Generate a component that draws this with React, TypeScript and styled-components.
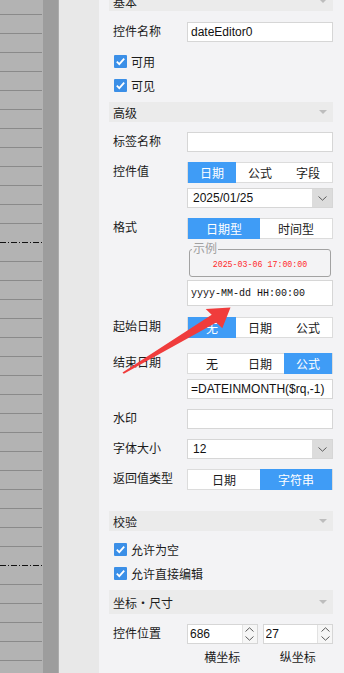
import styled, { createGlobalStyle } from "styled-components";

const GlobalStyle = createGlobalStyle`
  html, body {
    margin: 0;
    padding: 0;
    overflow: hidden;
  }
  body {
    font-family: "Liberation Sans", "Noto Sans CJK SC", sans-serif;
    font-size: 12px;
    color: #1b1b1b;
  }
`;

const GRID_ROWS = 35;
const DASHED_ROWS = [12, 29];

const Canvas = () => (
  <SCanvas width="43" height="673" viewBox="0 0 43 673">
    <rect width="43" height="673" fill="#b3b3b3" />
    {Array.from({ length: GRID_ROWS }, (_, k) => {
      const y = 14 + 19 * k + 0.5;
      const dashed = DASHED_ROWS.includes(k);
      return (
        <line
          key={k}
          x1="0"
          x2="42"
          y1={y}
          y2={y}
          stroke={dashed ? "#111" : "#8a8a8a"}
          strokeWidth="1"
          strokeDasharray={dashed ? "6 2 1 2" : undefined}
        />
      );
    })}
  </SCanvas>
);

const Chevron = ({ up }: { up?: boolean }) => (
  <svg width="9" height="5" viewBox="0 0 9 5">
    <path
      d={up ? "M0.5 4.5 L4.5 0.8 L8.5 4.5" : "M0.5 0.5 L4.5 4.2 L8.5 0.5"}
      fill="none"
      stroke="#5a5a5a"
      strokeWidth="1"
    />
  </svg>
);

const Check = ({ label }: { label: string }) => (
  <SCheckRow>
    <SBox>
      <svg width="13" height="13" viewBox="0 0 13 13">
        <path d="M2.8 6.6 L5.3 9.1 L10.2 3.6" fill="none" stroke="#fff" strokeWidth="1.8" />
      </svg>
    </SBox>
    {label}
  </SCheckRow>
);

const Segmented = ({ items, active }: { items: string[]; active: number }) => (
  <SSeg>
    {items.map((it, i) => (
      <SSegItem key={it} $on={i === active}>
        {it}
      </SSegItem>
    ))}
  </SSeg>
);

const Select = ({ value }: { value: string }) => (
  <SSelect>
    <SSelectText>{value}</SSelectText>
    <SSelectBtn>
      <Chevron />
    </SSelectBtn>
  </SSelect>
);

const Spinner = ({ value }: { value: string }) => (
  <SSpinner>
    <SSpinInput readOnly defaultValue={value} />
    <SSpinBtns>
      <Chevron up />
      <Chevron />
    </SSpinBtns>
  </SSpinner>
);

export default function App() {
  return (
    <SPage>
      <GlobalStyle />
      <Canvas />
      <SGutter />
      <SSpacer />
      <SPanel>
        <SPanelInner>
          <SHeader>
            基本 <SCaret />
          </SHeader>

          <SRow $mt={11}>
            <SLabel>控件名称</SLabel>
            <SControls>
              <SInput readOnly defaultValue="dateEditor0" />
            </SControls>
          </SRow>
          <SChecks $mt={7}>
            <Check label="可用" />
            <Check label="可见" />
          </SChecks>

          <SHeader $mt={5}>
            高级 <SCaret />
          </SHeader>

          <SRow $mt={10}>
            <SLabel>标签名称</SLabel>
            <SControls>
              <SInput readOnly defaultValue="" />
            </SControls>
          </SRow>

          <SRow $mt={10}>
            <SLabel>控件值</SLabel>
            <SControls $gap={5}>
              <Segmented items={["日期", "公式", "字段"]} active={0} />
              <Select value="2025/01/25" />
            </SControls>
          </SRow>

          <SRow $mt={10}>
            <SLabel>格式</SLabel>
            <SControls>
              <Segmented items={["日期型", "时间型"]} active={0} />
              <SExample>
                <SLegend>示例</SLegend>
                <SSample>2025-03-06 17:00:00</SSample>
              </SExample>
              <SFormat readOnly defaultValue="yyyy-MM-dd HH:00:00" />
            </SControls>
          </SRow>

          <SRow $mt={11}>
            <SLabel>起始日期</SLabel>
            <SControls>
              <Segmented items={["无", "日期", "公式"]} active={0} />
            </SControls>
          </SRow>

          <SRow $mt={15}>
            <SLabel>结束日期</SLabel>
            <SControls $gap={5}>
              <Segmented items={["无", "日期", "公式"]} active={2} />
              <SInput readOnly defaultValue="=DATEINMONTH($rq,-1)" />
            </SControls>
          </SRow>

          <SRow $mt={10}>
            <SLabel>水印</SLabel>
            <SControls>
              <SInput readOnly defaultValue="" />
            </SControls>
          </SRow>

          <SRow $mt={10}>
            <SLabel>字体大小</SLabel>
            <SControls>
              <Select value="12" />
            </SControls>
          </SRow>

          <SRow $mt={10}>
            <SLabel>返回值类型</SLabel>
            <SControls>
              <Segmented items={["日期", "字符串"]} active={1} />
            </SControls>
          </SRow>

          <SHeader $mt={21}>
            校验 <SCaret />
          </SHeader>
          <SChecks $mt={6}>
            <Check label="允许为空" />
            <Check label="允许直接编辑" />
          </SChecks>

          <SHeader $mt={5} $h={24}>
            坐标・尺寸 <SCaret />
          </SHeader>

          <SRow $mt={10}>
            <SLabel>控件位置</SLabel>
            <SControls $row>
              <Spinner value="686" />
              <Spinner value="27" />
            </SControls>
          </SRow>
          <SSubLabels>
            <span>横坐标</span>
            <span>纵坐标</span>
          </SSubLabels>
        </SPanelInner>
      </SPanel>

      <SArrow width="344" height="673" viewBox="0 0 344 673">
        <polygon
          points="122.5,372.5 211.7,314.8 205.7,309 230.5,307.5 222.3,328.3 216.3,322.4 123.8,373.8"
          fill="#f03c3c"
        />
      </SArrow>
    </SPage>
  );
}

const SPage = styled.div`
  position: relative;
  display: flex;
  width: 100vw;
  height: 100vh;
  overflow: hidden;
`;

const SCanvas = styled.svg`
  display: block;
  flex-shrink: 0;
`;

const SGutter = styled.div`
  width: 15px;
  flex-shrink: 0;
  background: #9d9d9d;
  border-right: 1px solid #acacac;
`;

const SSpacer = styled.div`
  width: 40px;
  flex-shrink: 0;
  background: #e8e8e8;
`;

const SPanel = styled.div`
  flex: 1;
  min-width: 0;
  background: #f3f3f5;
  padding: 0 11px 0 10px;
`;

const SPanelInner = styled.div`
  margin-top: -9px;
  display: flex;
  flex-direction: column;
`;

const SHeader = styled.div<{ $mt?: number; $h?: number }>`
  margin-top: ${(p) => p.$mt ?? 0}px;
  height: ${(p) => p.$h ?? 20}px;
  background: #ebebeb;
  display: flex;
  align-items: center;
  justify-content: space-between;
  padding: 0 6px 0 4px;
  color: #1e1e1e;
`;

const SCaret = styled.span`
  width: 0;
  height: 0;
  border-left: 4px solid transparent;
  border-right: 4px solid transparent;
  border-top: 4px solid #bdbdbd;
`;

const SRow = styled.div<{ $mt?: number }>`
  display: flex;
  align-items: flex-start;
  margin-top: ${(p) => p.$mt ?? 0}px;
`;

const SLabel = styled.div`
  width: 74px;
  flex-shrink: 0;
  padding-left: 4px;
  line-height: 20px;
  white-space: nowrap;
`;

const SControls = styled.div<{ $gap?: number; $row?: boolean }>`
  flex: 1;
  min-width: 0;
  display: flex;
  flex-direction: ${(p) => (p.$row ? "row" : "column")};
  gap: ${(p) => (p.$row ? 5 : p.$gap ?? 0)}px;
`;

const SInput = styled.input`
  box-sizing: border-box;
  width: 100%;
  height: 20px;
  margin: 0;
  padding: 0 3px;
  border: 1px solid #d6d6d6;
  border-radius: 0;
  background: #fff;
  font: 12px "Liberation Sans", "Noto Sans CJK SC", sans-serif;
  color: #111;
  outline: none;
`;

const SFormat = styled(SInput)`
  height: 26px;
  margin-top: 3px;
  padding: 0 3px;
  font: 10px "Liberation Mono", monospace;
  color: #111;
`;

const SChecks = styled.div<{ $mt?: number }>`
  margin-top: ${(p) => p.$mt ?? 0}px;
  display: flex;
  flex-direction: column;
`;

const SCheckRow = styled.div`
  height: 24px;
  display: flex;
  align-items: center;
  gap: 4px;
  padding-left: 5px;
`;

const SBox = styled.span`
  width: 13px;
  height: 13px;
  display: flex;
  background: #3b8fe7;
  border-radius: 1px;
`;

const SSeg = styled.div`
  box-sizing: border-box;
  height: 21px;
  display: flex;
  background: #fff;
  border: 1px solid #dcdcdc;
`;

const SSegItem = styled.div<{ $on?: boolean }>`
  flex: 1;
  display: flex;
  align-items: center;
  justify-content: center;
  margin: -1px 0;
  background: ${(p) => (p.$on ? "#3f9cf6" : "transparent")};
  color: ${(p) => (p.$on ? "#fff" : "#1b1b1b")};
`;

const SSelect = styled.div`
  box-sizing: border-box;
  height: 20px;
  display: flex;
  background: #fff;
  border: 1px solid #d6d6d6;
`;

const SSelectText = styled.div`
  flex: 1;
  display: flex;
  align-items: center;
  padding: 0 5px;
  font-family: "Liberation Sans", sans-serif;
  color: #111;
`;

const SSelectBtn = styled.div`
  width: 20px;
  display: flex;
  align-items: center;
  justify-content: center;
  background: #dcdcdc;
`;

const SExample = styled.fieldset`
  margin: 4px 2px 0;
  padding: 4px 0 5px;
  min-width: 0;
  border: 1px solid #a2a2a2;
  border-radius: 3px;
  display: flex;
  justify-content: center;
`;

const SLegend = styled.legend`
  margin-left: 2px;
  padding: 0 1px;
  font-size: 12px;
  line-height: 12px;
  color: #a0a0a0;
`;

const SSample = styled.div`
  font: 8.3px/12px "Liberation Mono", monospace;
  color: #ff2b2b;
  text-align: center;
`;

const SSpinner = styled.div`
  box-sizing: border-box;
  flex: 1;
  min-width: 0;
  height: 20px;
  display: flex;
  background: #fff;
  border: 1px solid #d6d6d6;
`;

const SSpinInput = styled.input`
  flex: 1;
  min-width: 0;
  margin: 0;
  padding: 0 2px;
  border: none;
  background: transparent;
  font: 12px "Liberation Sans", sans-serif;
  color: #111;
  outline: none;
`;

const SSpinBtns = styled.div`
  width: 14px;
  display: flex;
  flex-direction: column;
  align-items: center;
  justify-content: space-around;
  background: #f6f6f6;
  border-left: 1px solid #e2e2e2;
`;

const SSubLabels = styled.div`
  margin: 6px 0 0 78px;
  display: flex;
  gap: 5px;
  line-height: 16px;
  span {
    flex: 1;
    text-align: center;
  }
`;

const SArrow = styled.svg`
  position: absolute;
  top: 0;
  left: 0;
  pointer-events: none;
`;
